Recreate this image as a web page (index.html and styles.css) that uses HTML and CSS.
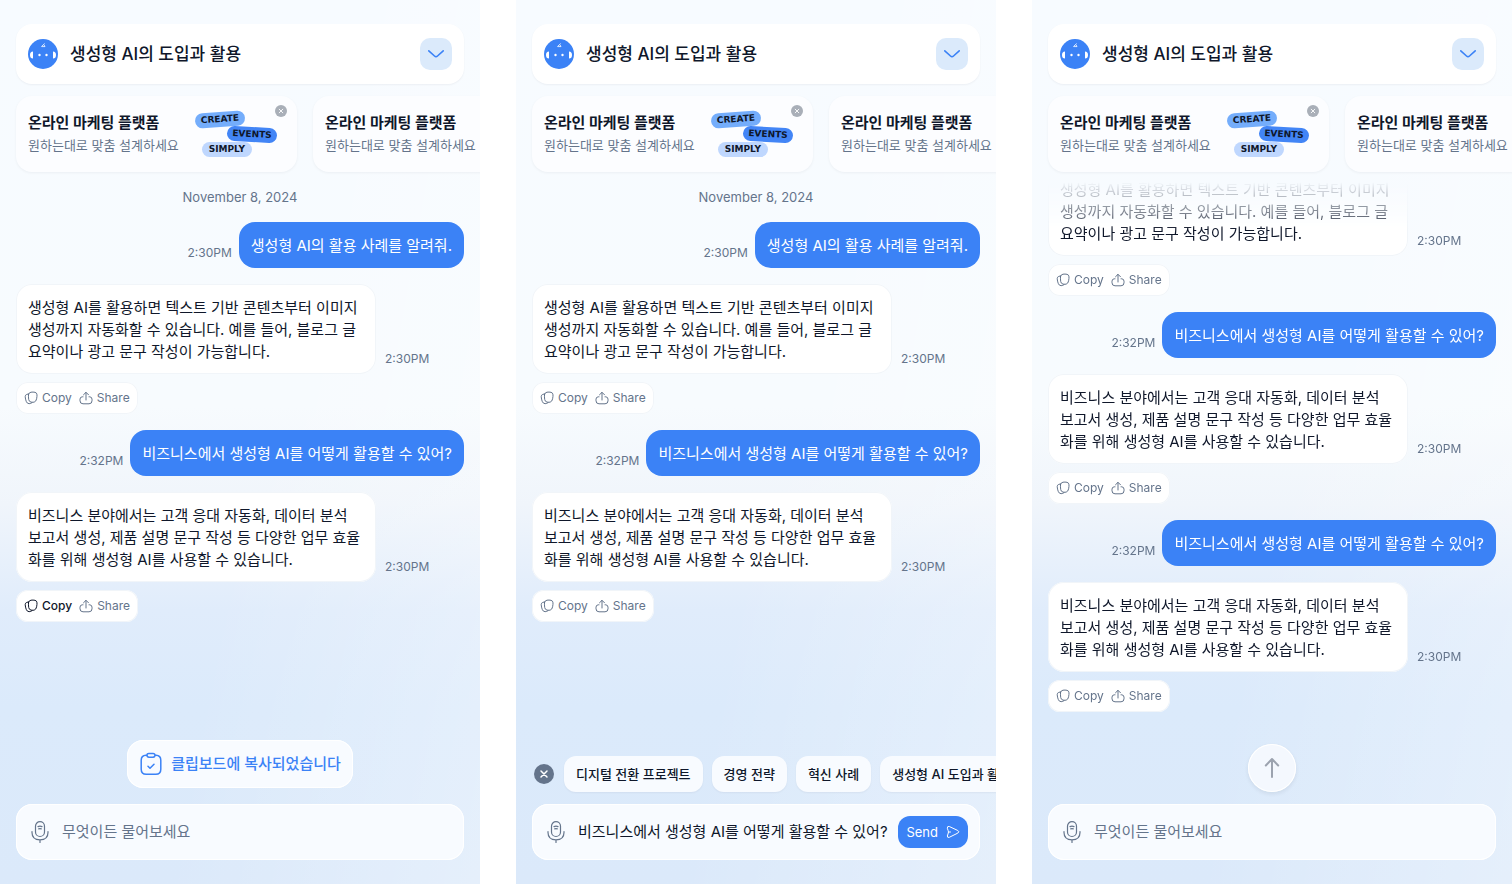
FILE: index.html
```html
<!DOCTYPE html>
<html lang="ko">
<head>
<meta charset="utf-8">
<title>생성형 AI의 도입과 활용</title>
<link rel="stylesheet" href="styles.css">
</head>
<body>
<svg class="sprite" aria-hidden="true">
  <symbol id="bot" viewBox="0 0 30 30">
    <circle cx="15" cy="15" r="15" fill="#3b82f6"/>
    <path d="M5 12.500v7a3 3.500 0 0 1 0-7zM25 12.500v7a3 3.500 0 0 0 0-7z" fill="#fff"/>
    <circle cx="11.500" cy="16" r="1.200" fill="#fff"/>
    <circle cx="18.500" cy="16" r="1.200" fill="#fff"/>
    <path d="M13.800 7.200l2.600-2.400M14 7.600h3l-.8-1.400" fill="none" stroke="#fff" stroke-width=".8" stroke-linecap="round"/>
  </symbol>
  <symbol id="chevron" viewBox="0 0 16 16">
    <path d="M.8 4.800l5.700 5.200q1.500 1.300 3 0l5.700-5.200" fill="none" stroke="currentColor" stroke-width="1.600" stroke-linecap="round"/>
  </symbol>
  <symbol id="close" viewBox="0 0 20 20">
    <circle cx="10" cy="10" r="10" fill="currentColor"/>
    <path d="M7 7l6 6M13 7l-6 6" stroke="#fff" stroke-width="1.500" stroke-linecap="round"/>
  </symbol>
  <symbol id="copy" viewBox="0 0 14 14">
    <path d="M4.500 3.500q.3-2 2.500-2.300 2-.3 4 .1 1.900.4 2 2.500.1 1.500-.4 4-.5 2.700-2.400 3.300-1.500.4-3.200 0-2-.5-2.300-2.600-.4-2.600-.2-5zM4.500 2.900l-1.700.5q-1.700.5-1.600 2.300.2 2.500 1 4.600.8 2.300 2.900 2.400 1.700 0 3.200-1.200" fill="none" stroke="currentColor" stroke-linecap="round" stroke-linejoin="round"/>
  </symbol>
  <symbol id="share" viewBox="0 0 14 14">
    <path d="M7 9V1.500M4.500 3.800L7 1.300l2.500 2.500M4 5.800h-.8Q1 6 1 8.200v1.600Q1 12.800 4 12.800h6q3 0 3-3V8.200q0-2.200-2.200-2.400H10" fill="none" stroke="currentColor" stroke-linecap="round" stroke-linejoin="round"/>
  </symbol>
  <symbol id="mic" viewBox="0 0 24 24">
    <rect x="7.500" y="1.700" width="9" height="14.800" rx="4.500" fill="none" stroke="currentColor" stroke-width="1.200"/>
    <path d="M10 6.600q2-.8 4 0M10.700 8.900q1.300-.4 2.600 0M4 11.500v1q0 7.300 8 7.300t8-7.300v-1M12 20v2.500" fill="none" stroke="currentColor" stroke-width="1.200" stroke-linecap="round"/>
  </symbol>
  <symbol id="clipboard" viewBox="0 0 24 24">
    <path d="M8 3.200H7q-4.800.3-4.800 5v9q0 5 5 5h9.600q5 0 5-5v-9q0-4.700-4.800-5h-1M10 1.500h4q2 0 2 1.800t-2 1.900h-4q-2 0-2-1.900t2-1.800zM9 14.300l2 1.900 4-4" fill="none" stroke="currentColor" stroke-width="1.500" stroke-linecap="round" stroke-linejoin="round"/>
  </symbol>
  <symbol id="send" viewBox="0 0 14 14">
    <path d="M1.300 2.800q0-2 2-1.300l8.500 4q2 1.200 0 2.600l-8.500 4.200q-2 .7-2-1.300l1-3q.4-1 0-2zM2.500 7h2" fill="none" stroke="currentColor" stroke-linecap="round" stroke-linejoin="round"/>
  </symbol>
  <symbol id="up" viewBox="0 0 24 24">
    <path d="M12 21V3.500M5.800 9.500L12 3l6.200 6.500" fill="none" stroke="currentColor" stroke-width="2" stroke-linecap="round" stroke-linejoin="round"/>
  </symbol>
</svg>

<main class="board">
  <section class="phone">
    <header class="topbar">
      <svg class="avatar"><use href="#bot"/></svg>
      <h1 class="title">생성형 AI의 도입과 활용</h1>
      <button class="toggle" aria-label="펼치기"><svg class="icon-16"><use href="#chevron"/></svg></button>
    </header>
    <div class="promos">
      <article class="promo">
        <div class="promo-copy"><h2 class="promo-title">온라인 마케팅 플랫폼</h2><p class="promo-sub">원하는대로 맞춤 설계하세요</p></div>
        <div class="promo-art"><span class="tag tag-create">CREATE</span><span class="tag tag-events">EVENTS</span><span class="tag tag-simply">SIMPLY</span></div>
        <button class="promo-close" aria-label="닫기"><svg class="icon-12"><use href="#close"/></svg></button>
      </article>
      <article class="promo">
        <div class="promo-copy"><h2 class="promo-title">온라인 마케팅 플랫폼</h2><p class="promo-sub">원하는대로 맞춤 설계하세요</p></div>
      </article>
    </div>
    <div class="chat">
      <p class="date">November 8, 2024</p>
      <div class="row mine"><time class="time">2:30PM</time><p class="bubble">생성형 AI의 활용 사례를 알려줘.</p></div>
      <div class="row"><p class="bubble">생성형 AI를 활용하면 텍스트 기반 콘텐츠부터 이미지<br>생성까지 자동화할 수 있습니다. 예를 들어, 블로그 글<br>요약이나 광고 문구 작성이 가능합니다.</p><time class="time">2:30PM</time></div>
      <div class="actions"><button class="action"><svg class="icon-14"><use href="#copy"/></svg>Copy</button><button class="action"><svg class="icon-14"><use href="#share"/></svg>Share</button></div>
      <div class="row mine"><time class="time">2:32PM</time><p class="bubble">비즈니스에서 생성형 AI를 어떻게 활용할 수 있어?</p></div>
      <div class="row"><p class="bubble">비즈니스 분야에서는 고객 응대 자동화, 데이터 분석<br>보고서 생성, 제품 설명 문구 작성 등 다양한 업무 효율<br>화를 위해 생성형 AI를 사용할 수 있습니다.</p><time class="time">2:30PM</time></div>
      <div class="actions"><button class="action active"><svg class="icon-14"><use href="#copy"/></svg>Copy</button><button class="action"><svg class="icon-14"><use href="#share"/></svg>Share</button></div>
    </div>
    <footer class="footer">
      <p class="toast" role="status"><svg class="icon-24"><use href="#clipboard"/></svg>클립보드에 복사되었습니다</p>
      <form class="composer"><svg class="icon-24"><use href="#mic"/></svg><input class="field" type="text" placeholder="무엇이든 물어보세요" aria-label="메시지"></form>
    </footer>
  </section>

  <section class="phone">
    <header class="topbar">
      <svg class="avatar"><use href="#bot"/></svg>
      <h1 class="title">생성형 AI의 도입과 활용</h1>
      <button class="toggle" aria-label="펼치기"><svg class="icon-16"><use href="#chevron"/></svg></button>
    </header>
    <div class="promos">
      <article class="promo">
        <div class="promo-copy"><h2 class="promo-title">온라인 마케팅 플랫폼</h2><p class="promo-sub">원하는대로 맞춤 설계하세요</p></div>
        <div class="promo-art"><span class="tag tag-create">CREATE</span><span class="tag tag-events">EVENTS</span><span class="tag tag-simply">SIMPLY</span></div>
        <button class="promo-close" aria-label="닫기"><svg class="icon-12"><use href="#close"/></svg></button>
      </article>
      <article class="promo">
        <div class="promo-copy"><h2 class="promo-title">온라인 마케팅 플랫폼</h2><p class="promo-sub">원하는대로 맞춤 설계하세요</p></div>
      </article>
    </div>
    <div class="chat">
      <p class="date">November 8, 2024</p>
      <div class="row mine"><time class="time">2:30PM</time><p class="bubble">생성형 AI의 활용 사례를 알려줘.</p></div>
      <div class="row"><p class="bubble">생성형 AI를 활용하면 텍스트 기반 콘텐츠부터 이미지<br>생성까지 자동화할 수 있습니다. 예를 들어, 블로그 글<br>요약이나 광고 문구 작성이 가능합니다.</p><time class="time">2:30PM</time></div>
      <div class="actions"><button class="action"><svg class="icon-14"><use href="#copy"/></svg>Copy</button><button class="action"><svg class="icon-14"><use href="#share"/></svg>Share</button></div>
      <div class="row mine"><time class="time">2:32PM</time><p class="bubble">비즈니스에서 생성형 AI를 어떻게 활용할 수 있어?</p></div>
      <div class="row"><p class="bubble">비즈니스 분야에서는 고객 응대 자동화, 데이터 분석<br>보고서 생성, 제품 설명 문구 작성 등 다양한 업무 효율<br>화를 위해 생성형 AI를 사용할 수 있습니다.</p><time class="time">2:30PM</time></div>
      <div class="actions"><button class="action"><svg class="icon-14"><use href="#copy"/></svg>Copy</button><button class="action"><svg class="icon-14"><use href="#share"/></svg>Share</button></div>
    </div>
    <footer class="footer">
      <div class="chips">
        <button class="chips-close" aria-label="닫기"><svg class="icon-20"><use href="#close"/></svg></button>
        <button class="chip">디지털 전환 프로젝트</button>
        <button class="chip">경영 전략</button>
        <button class="chip">혁신 사례</button>
        <button class="chip">생성형 AI 도입과 활용</button>
      </div>
      <form class="composer"><svg class="icon-24"><use href="#mic"/></svg><input class="field" type="text" value="비즈니스에서 생성형 AI를 어떻게 활용할 수 있어?" aria-label="메시지"><button class="send" type="button">Send<svg class="icon-14"><use href="#send"/></svg></button></form>
    </footer>
  </section>

  <section class="phone">
    <header class="topbar">
      <svg class="avatar"><use href="#bot"/></svg>
      <h1 class="title">생성형 AI의 도입과 활용</h1>
      <button class="toggle" aria-label="펼치기"><svg class="icon-16"><use href="#chevron"/></svg></button>
    </header>
    <div class="promos">
      <article class="promo">
        <div class="promo-copy"><h2 class="promo-title">온라인 마케팅 플랫폼</h2><p class="promo-sub">원하는대로 맞춤 설계하세요</p></div>
        <div class="promo-art"><span class="tag tag-create">CREATE</span><span class="tag tag-events">EVENTS</span><span class="tag tag-simply">SIMPLY</span></div>
        <button class="promo-close" aria-label="닫기"><svg class="icon-12"><use href="#close"/></svg></button>
      </article>
      <article class="promo">
        <div class="promo-copy"><h2 class="promo-title">온라인 마케팅 플랫폼</h2><p class="promo-sub">원하는대로 맞춤 설계하세요</p></div>
      </article>
    </div>
    <div class="chat scrolled">
      <div class="row"><p class="bubble">생성형 AI를 활용하면 텍스트 기반 콘텐츠부터 이미지<br>생성까지 자동화할 수 있습니다. 예를 들어, 블로그 글<br>요약이나 광고 문구 작성이 가능합니다.</p><time class="time">2:30PM</time></div>
      <div class="actions"><button class="action"><svg class="icon-14"><use href="#copy"/></svg>Copy</button><button class="action"><svg class="icon-14"><use href="#share"/></svg>Share</button></div>
      <div class="row mine"><time class="time">2:32PM</time><p class="bubble">비즈니스에서 생성형 AI를 어떻게 활용할 수 있어?</p></div>
      <div class="row"><p class="bubble">비즈니스 분야에서는 고객 응대 자동화, 데이터 분석<br>보고서 생성, 제품 설명 문구 작성 등 다양한 업무 효율<br>화를 위해 생성형 AI를 사용할 수 있습니다.</p><time class="time">2:30PM</time></div>
      <div class="actions"><button class="action"><svg class="icon-14"><use href="#copy"/></svg>Copy</button><button class="action"><svg class="icon-14"><use href="#share"/></svg>Share</button></div>
      <div class="row mine"><time class="time">2:32PM</time><p class="bubble">비즈니스에서 생성형 AI를 어떻게 활용할 수 있어?</p></div>
      <div class="row"><p class="bubble">비즈니스 분야에서는 고객 응대 자동화, 데이터 분석<br>보고서 생성, 제품 설명 문구 작성 등 다양한 업무 효율<br>화를 위해 생성형 AI를 사용할 수 있습니다.</p><time class="time">2:30PM</time></div>
      <div class="actions"><button class="action"><svg class="icon-14"><use href="#copy"/></svg>Copy</button><button class="action"><svg class="icon-14"><use href="#share"/></svg>Share</button></div>
    </div>
    <footer class="footer">
      <button class="to-top" aria-label="맨 위로"><svg class="icon-24"><use href="#up"/></svg></button>
      <form class="composer"><svg class="icon-24"><use href="#mic"/></svg><input class="field" type="text" placeholder="무엇이든 물어보세요" aria-label="메시지"></form>
    </footer>
  </section>
</main>
</body>
</html>
```
FILE: styles.css
```css
* { box-sizing: border-box; margin: 0; padding: 0; }

body {
  background: #fff;
  color: #0f172a;
  font-family: Inter, "Noto Sans CJK KR", sans-serif;
  font-size: 15px;
  line-height: 22px;
}

button, input { font: inherit; color: inherit; border: 0; background: none; }
button { cursor: pointer; }
svg { flex: none; display: block; }
.sprite { position: absolute; width: 0; height: 0; }
.icon-12 { width: 12px; height: 12px; }
.icon-14 { width: 14px; height: 14px; }
.icon-16 { width: 16px; height: 16px; }
.icon-20 { width: 20px; height: 20px; }
.icon-24 { width: 24px; height: 24px; }

.board {
  display: grid;
  grid-template-columns: repeat(3, minmax(0, 1fr));
  gap: 36px;
  height: 100vh;
}

.phone {
  display: flex;
  flex-direction: column;
  min-height: 0;
  padding: 24px 16px;
  overflow: hidden;
  background:
    linear-gradient(100deg, #fff0 50%, #ffffff48 100%),
    linear-gradient(#f7fbff 0%, #f7fbfe 46%, #f0f5fb 57%, #e0ecfb 69%, #dbeafb 80%, #dbe9fa 100%);
}

.topbar {
  display: flex;
  align-items: center;
  gap: 12px;
  padding: 14px 12px;
  border-radius: 16px;
  background: #fff;
  box-shadow: 0 1px 2px #0f172a0d;
}
.avatar { width: 30px; height: 30px; }
.title { flex: 1; font-size: 17px; line-height: 32px; font-weight: 500; white-space: nowrap; }
.toggle {
  display: grid;
  place-items: center;
  width: 32px;
  height: 32px;
  border-radius: 10px;
  background: #dbeafb;
  color: #3b82f6;
}

.promos { display: flex; gap: 16px; margin-top: 12px; }
.promo {
  position: relative;
  flex: none;
  display: flex;
  align-items: center;
  gap: 16px;
  width: 281px;
  padding: 15px 12px;
  border-radius: 16px;
  background: #fcfdff;
  box-shadow: 0 1px 3px #0f172a0d;
  white-space: nowrap;
}
.promo-copy { padding-bottom: 2px; }
.promo-title { font-size: 15px; line-height: 24px; font-weight: 700; }
.promo-sub { font-size: 13px; line-height: 20px; color: #64748b; }
.promo-art { display: flex; flex-direction: column; width: 84px; }
.tag {
  width: 50px;
  border-radius: 8px;
  font: 700 9px/15px "DejaVu Sans", sans-serif;
  text-align: center;
}
.tag-create { background: #74adfb; transform: rotate(-4deg); }
.tag-events { align-self: flex-end; background: #4285f6; transform: rotate(3deg); margin-right: 2px; }
.tag-simply { margin-left: 7px; background: #bfd7fe; }
.promo-close { position: absolute; top: 9px; right: 10px; color: #a9afb8; }

.chat { flex: 1; min-height: 0; display: flex; flex-direction: column; gap: 16px; padding-top: 14px; white-space: nowrap; }
.scrolled {
  justify-content: flex-end;
  margin-bottom: 32px;
  padding-top: 0;
  overflow: hidden;
  mask-image: linear-gradient(#0000 10px, #0004 24px, #0008 42px, #000 58px);
}
.date { font-size: 13px; line-height: 20px; color: #64748b; text-align: center; padding-top: 1px; margin-bottom: -1px; }
.row { display: flex; align-items: flex-end; gap: 9px; }
.mine { justify-content: flex-end; gap: 7px; }
.bubble {
  width: 360px;
  padding: 13px 12px 11px;
  border-radius: 16px;
  background: #fff;
  box-shadow: inset 0 0 0 1px #f1f5f9;
}
.mine .bubble { width: auto; background: #3b82f6; color: #fff; box-shadow: none; }
.time { padding-bottom: 7px; font-size: 12px; line-height: 16px; color: #64748b; }
.actions {
  align-self: flex-start;
  display: flex;
  gap: 7px;
  margin-top: -8px;
  padding: 8px;
  border-radius: 12px;
  background: #fff;
  box-shadow: inset 0 0 0 1px #f1f5f9;
}
.action { display: flex; align-items: center; gap: 4px; font-size: 12px; line-height: 16px; color: #64748b; }
.active { color: #0f172a; font-weight: 500; }

.footer { display: flex; flex-direction: column; align-items: center; gap: 16px; }
.toast {
  display: flex;
  align-items: center;
  gap: 8px;
  padding: 12px;
  border-radius: 16px;
  background: #f8fbff;
  box-shadow: inset 0 0 0 1px #fff;
  color: #3b82f6;
  font-weight: 500;
  line-height: 24px;
}
.composer {
  align-self: stretch;
  display: flex;
  align-items: center;
  gap: 10px;
  height: 56px;
  padding: 12px;
  border-radius: 16px;
  background: #f8fbff;
  box-shadow: inset 0 0 0 1px #fff;
  color: #64748b;
}
.field { flex: 1; min-width: 0; color: #0f172a; outline: 0; }
.field::placeholder { color: #64748b; opacity: 1; }
.send {
  display: flex;
  align-items: center;
  gap: 8px;
  padding: 5px 8px;
  border-radius: 12px;
  background: #3b82f6;
  color: #fff;
  font-size: 13px;
}
.chips { align-self: stretch; display: flex; align-items: center; gap: 9px; margin-bottom: -4px; white-space: nowrap; }
.chips-close { margin: 0 1px 0 2px; color: #64748b; }
.chip {
  flex: none;
  padding: 7px 12px;
  border-radius: 12px;
  background: #f8fbff;
  box-shadow: 0 1px 2px #0f172a0d;
  font-size: 13px;
  font-weight: 500;
}
.to-top {
  display: grid;
  place-items: center;
  width: 48px;
  height: 48px;
  margin-bottom: -4px;
  border-radius: 50%;
  background: #f4f8fe;
  box-shadow: inset 0 0 0 1px #fff, 0 2px 4px #0f172a14;
  color: #9ca3af;
}
```
